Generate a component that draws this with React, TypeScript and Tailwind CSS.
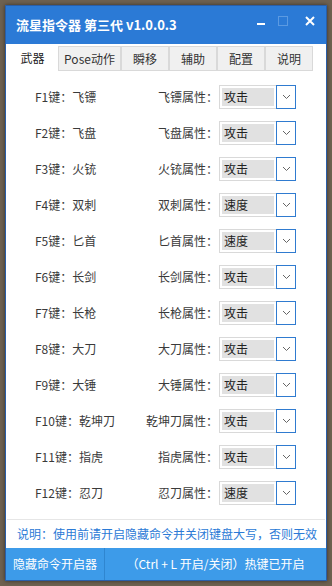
import React from 'react'

const rows = [
  { key: 'F1', name: '飞镖', attr: '攻击' },
  { key: 'F2', name: '飞盘', attr: '攻击' },
  { key: 'F3', name: '火铳', attr: '攻击' },
  { key: 'F4', name: '双刺', attr: '速度' },
  { key: 'F5', name: '匕首', attr: '速度' },
  { key: 'F6', name: '长剑', attr: '攻击' },
  { key: 'F7', name: '长枪', attr: '攻击' },
  { key: 'F8', name: '大刀', attr: '攻击' },
  { key: 'F9', name: '大锤', attr: '攻击' },
  { key: 'F10', name: '乾坤刀', attr: '攻击' },
  { key: 'F11', name: '指虎', attr: '攻击' },
  { key: 'F12', name: '忍刀', attr: '速度' },
]

const tabs = ['武器', 'Pose动作', '瞬移', '辅助', '配置', '说明']
const tabWidths = ['w-[51px]', 'w-[63px]', 'w-[48px]', 'w-[48px]', 'w-[48px]', 'w-[48px]']

const font = { fontFamily: '"Microsoft YaHei", "Noto Sans CJK SC", "Noto Sans", sans-serif' }

function Select({ value }: { value: string }) {
  return (
    <div className="flex h-[24px] w-[77px] border border-[#d9d9d9] bg-white">
      <div className="m-[2px] flex flex-1 items-center bg-[#e1e1e1] pl-[2px] text-[12px] text-[#222]">
        {value}
      </div>
      <div className="-my-px -mr-px flex w-[20px] items-center justify-center border border-[#2f7bd0] bg-white">
        <svg width="9" height="6" viewBox="0 0 9 6">
          <path d="M1 1 L4.5 4.5 L8 1" fill="none" stroke="#666" strokeWidth="1" />
        </svg>
      </div>
    </div>
  )
}

export default function App() {
  return (
    <div className="h-[586px] w-[332px] bg-[#6e6150] p-[5px]" style={font}>
      <div className="flex h-full flex-col border border-[#2a5ea8] bg-white shadow-[0_0_4px_rgba(0,0,0,0.5)]">
        {/* Title bar */}
        <div className="flex h-[38px] items-center justify-between bg-[#2b7ad6] pl-[10px]">
          <span className="text-[13px] font-bold text-white">流星指令器 第三代 v1.0.0.3</span>
          <div className="flex h-full items-start pt-[3px]">
            <div className="flex h-[24px] w-[22px] items-center justify-center">
              <div className="mt-[6px] h-[2px] w-[8px] bg-white" />
            </div>
            <div className="flex h-[24px] w-[22px] items-center justify-center">
              <div className="h-[10px] w-[10px] border border-[#5b9ae2]" />
            </div>
            <div className="flex h-[24px] w-[32px] items-center justify-center">
              <svg width="10" height="10" viewBox="0 0 10 10">
                <path d="M1 1 L9 9 M9 1 L1 9" stroke="white" strokeWidth="2" />
              </svg>
            </div>
          </div>
        </div>

        {/* Tabs */}
        <div className="flex h-[27px] items-end pl-[1px]">
          {tabs.map((tab, i) => (
            <div
              key={tab}
              className={`flex h-[25px] items-center justify-center text-[12px] ${tabWidths[i]} ${
                i === 0
                  ? 'h-[27px] bg-white text-[#222]'
                  : 'border border-[#d9d9d9] bg-[#f0f0f0] text-[#333]'
              }`}
            >
              {tab}
            </div>
          ))}
        </div>

        {/* Rows */}
        <div className="flex flex-1 flex-col pt-[8px]">
          {rows.map((row) => (
            <div key={row.key} className="flex h-[36px] items-center text-[12px] text-[#3a3a3a]">
              <span className="w-[120px] pl-[29px]">
                {row.key}键：{row.name}
              </span>
              <span className="w-[92px] text-right">{row.name}属性：</span>
              <div className="ml-[1px]">
                <Select value={row.attr} />
              </div>
            </div>
          ))}
        </div>

        {/* Note */}
        <div className="mx-[1px] border-t border-[#e6e6e6] py-[5px] pl-[10px] text-[12px] text-[#2b7ad6]">
          说明：使用前请开启隐藏命令并关闭键盘大写，否则无效
        </div>

        {/* Bottom bar */}
        <div className="flex h-[32px] bg-[#3d9be9] text-[12px] text-white">
          <div className="flex w-[99px] items-center justify-center border-r border-[#2f86d0]">
            隐藏命令开启器
          </div>
          <div className="flex flex-1 items-center justify-center">（Ctrl + L 开启/关闭）热键已开启</div>
        </div>
      </div>
    </div>
  )
}
